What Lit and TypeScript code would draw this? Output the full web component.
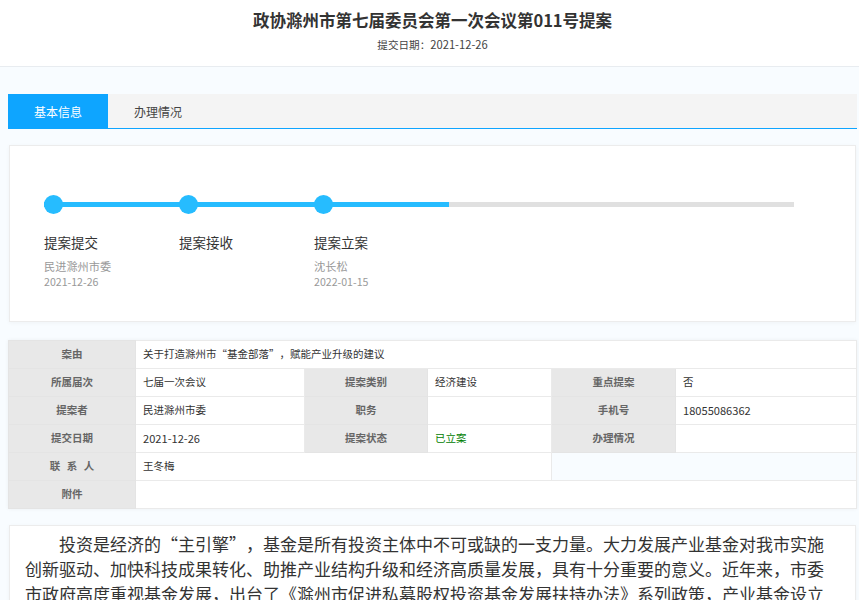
import { LitElement, html, css } from "lit";
import { customElement } from "lit/decorators.js";

@customElement("app-root")
export class AppRoot extends LitElement {
  static styles = css`
    :host { display: block; height: 600px; overflow: hidden; background: #f8fcff; font-family: "Noto Sans CJK SC", "Noto Sans", sans-serif; color: #333; text-spacing-trim: space-all; }
    header { height: 66px; padding-left: 6px; background: #fff; border-bottom: 1px solid #e8ecf0; display: flex; flex-direction: column; align-items: center; }
    h1 { margin: 7px 0 0; font-size: 16.5px; line-height: 26px; font-weight: 700; color: #333; }
    .date { margin-top: 3px; font-size: 10.6px; line-height: 16px; color: #444; }
    .date span { font-size: 11.2px; }
    main { padding: 27px 2px 0 8px; display: flex; flex-direction: column; }
    .tabs { display: flex; height: 34px; background: #f4f4f4; border-bottom: 1px solid #0ea5ff; }
    .tab { width: 100px; display: flex; align-items: center; justify-content: center; font-size: 12px; color: #444; }
    .tab.on { background: #0ea5ff; color: #fff; }
    .card { margin: 16px 1px 0 1px; background: #fff; border: 1px solid #ececec; box-shadow: 0 1px 4px rgba(0,0,0,.04); }
    .flow { height: 177px; padding: 49px 0 0 34px; box-sizing: border-box; }
    .rail { width: 750px; height: 19px; display: flex; background:
      linear-gradient(#26bcff, #26bcff) no-repeat left center / 405px 5px,
      linear-gradient(#e0e0e0, #e0e0e0) no-repeat left center / 100% 5px; }
    .slot { width: 135px; flex: none; }
    .dot { display: block; width: 19px; height: 19px; border-radius: 50%; background: #26bcff; }
    .steps { display: flex; margin-top: 18px; }
    .name { font-size: 13.5px; line-height: 20px; color: #333; }
    .sub { margin-top: 7px; font-size: 11.2px; line-height: 15px; color: #999; }
    .sub span { font-size: 10.6px; }
    table { margin: 18px 0 0 0; width: 849px; table-layout: fixed; border-collapse: collapse; background: #fff; font-size: 10.5px; box-shadow: 0 0 4px rgba(0,0,0,.05); }
    td { height: 28px; padding: 0 7px 2px; box-sizing: border-box; border: 1px solid #eaeaea; color: #333; }
    td.l { background: #e8e8e8; text-align: center; padding: 0 0 2px; color: #666; font-weight: 700; border-color: #e4e4e4; }
    td.blank { background: #f8fcff; }
    td .n { font-size: 11.1px; }
    .spaced { word-spacing: 4px; }
    .green { color: #008000; }
    .c1 { width: 127px; } .c2 { width: 169px; } .c3 { width: 123px; } .c4 { width: 124px; } .c5 { width: 124px; }
    .body { margin-top: 16px; padding: 5px 30px 0 15px; height: 200px; box-sizing: border-box; font-size: 17px; line-height: 25px; color: #333; text-indent: 34px; }
  `;

  render() {
    return html`
      <header>
        <h1>政协滁州市第七届委员会第一次会议第011号提案</h1>
        <div class="date">提交日期：<span>2021-12-26</span></div>
      </header>
      <main>
        <div class="tabs">
          <div class="tab on">基本信息</div>
          <div class="tab">办理情况</div>
        </div>
        <section class="card flow">
          <div class="rail">
            <div class="slot"><i class="dot"></i></div>
            <div class="slot"><i class="dot"></i></div>
            <div class="slot"><i class="dot"></i></div>
          </div>
          <div class="steps">
            <div class="slot"><div class="name">提案提交</div><div class="sub">民进滁州市委<br /><span>2021-12-26</span></div></div>
            <div class="slot"><div class="name">提案接收</div></div>
            <div class="slot"><div class="name">提案立案</div><div class="sub">沈长松<br /><span>2022-01-15</span></div></div>
          </div>
        </section>
        <table>
          <colgroup>
            <col class="c1" /><col class="c2" /><col class="c3" />
            <col class="c4" /><col class="c5" /><col />
          </colgroup>
          <tr><td class="l">案由</td><td colspan="5">关于打造滁州市“基金部落”，赋能产业升级的建议</td></tr>
          <tr><td class="l">所属届次</td><td>七届一次会议</td><td class="l">提案类别</td><td>经济建设</td><td class="l">重点提案</td><td>否</td></tr>
          <tr><td class="l">提案者</td><td>民进滁州市委</td><td class="l">职务</td><td></td><td class="l">手机号</td><td><span class="n">18055086362</span></td></tr>
          <tr><td class="l">提交日期</td><td><span class="n">2021-12-26</span></td><td class="l">提案状态</td><td class="green">已立案</td><td class="l">办理情况</td><td></td></tr>
          <tr><td class="l spaced">联 系 人</td><td colspan="3">王冬梅</td><td colspan="2" class="blank"></td></tr>
          <tr><td class="l">附件</td><td colspan="5"></td></tr>
        </table>
        <section class="card body">投资是经济的“主引擎”，基金是所有投资主体中不可或缺的一支力量。大力发展产业基金对我市实施创新驱动、加快科技成果转化、助推产业结构升级和经济高质量发展，具有十分重要的意义。近年来，市委市政府高度重视基金发展，出台了《滁州市促进私募股权投资基金发展扶持办法》系列政策，产业基金设立</section>
      </main>
    `;
  }
}
